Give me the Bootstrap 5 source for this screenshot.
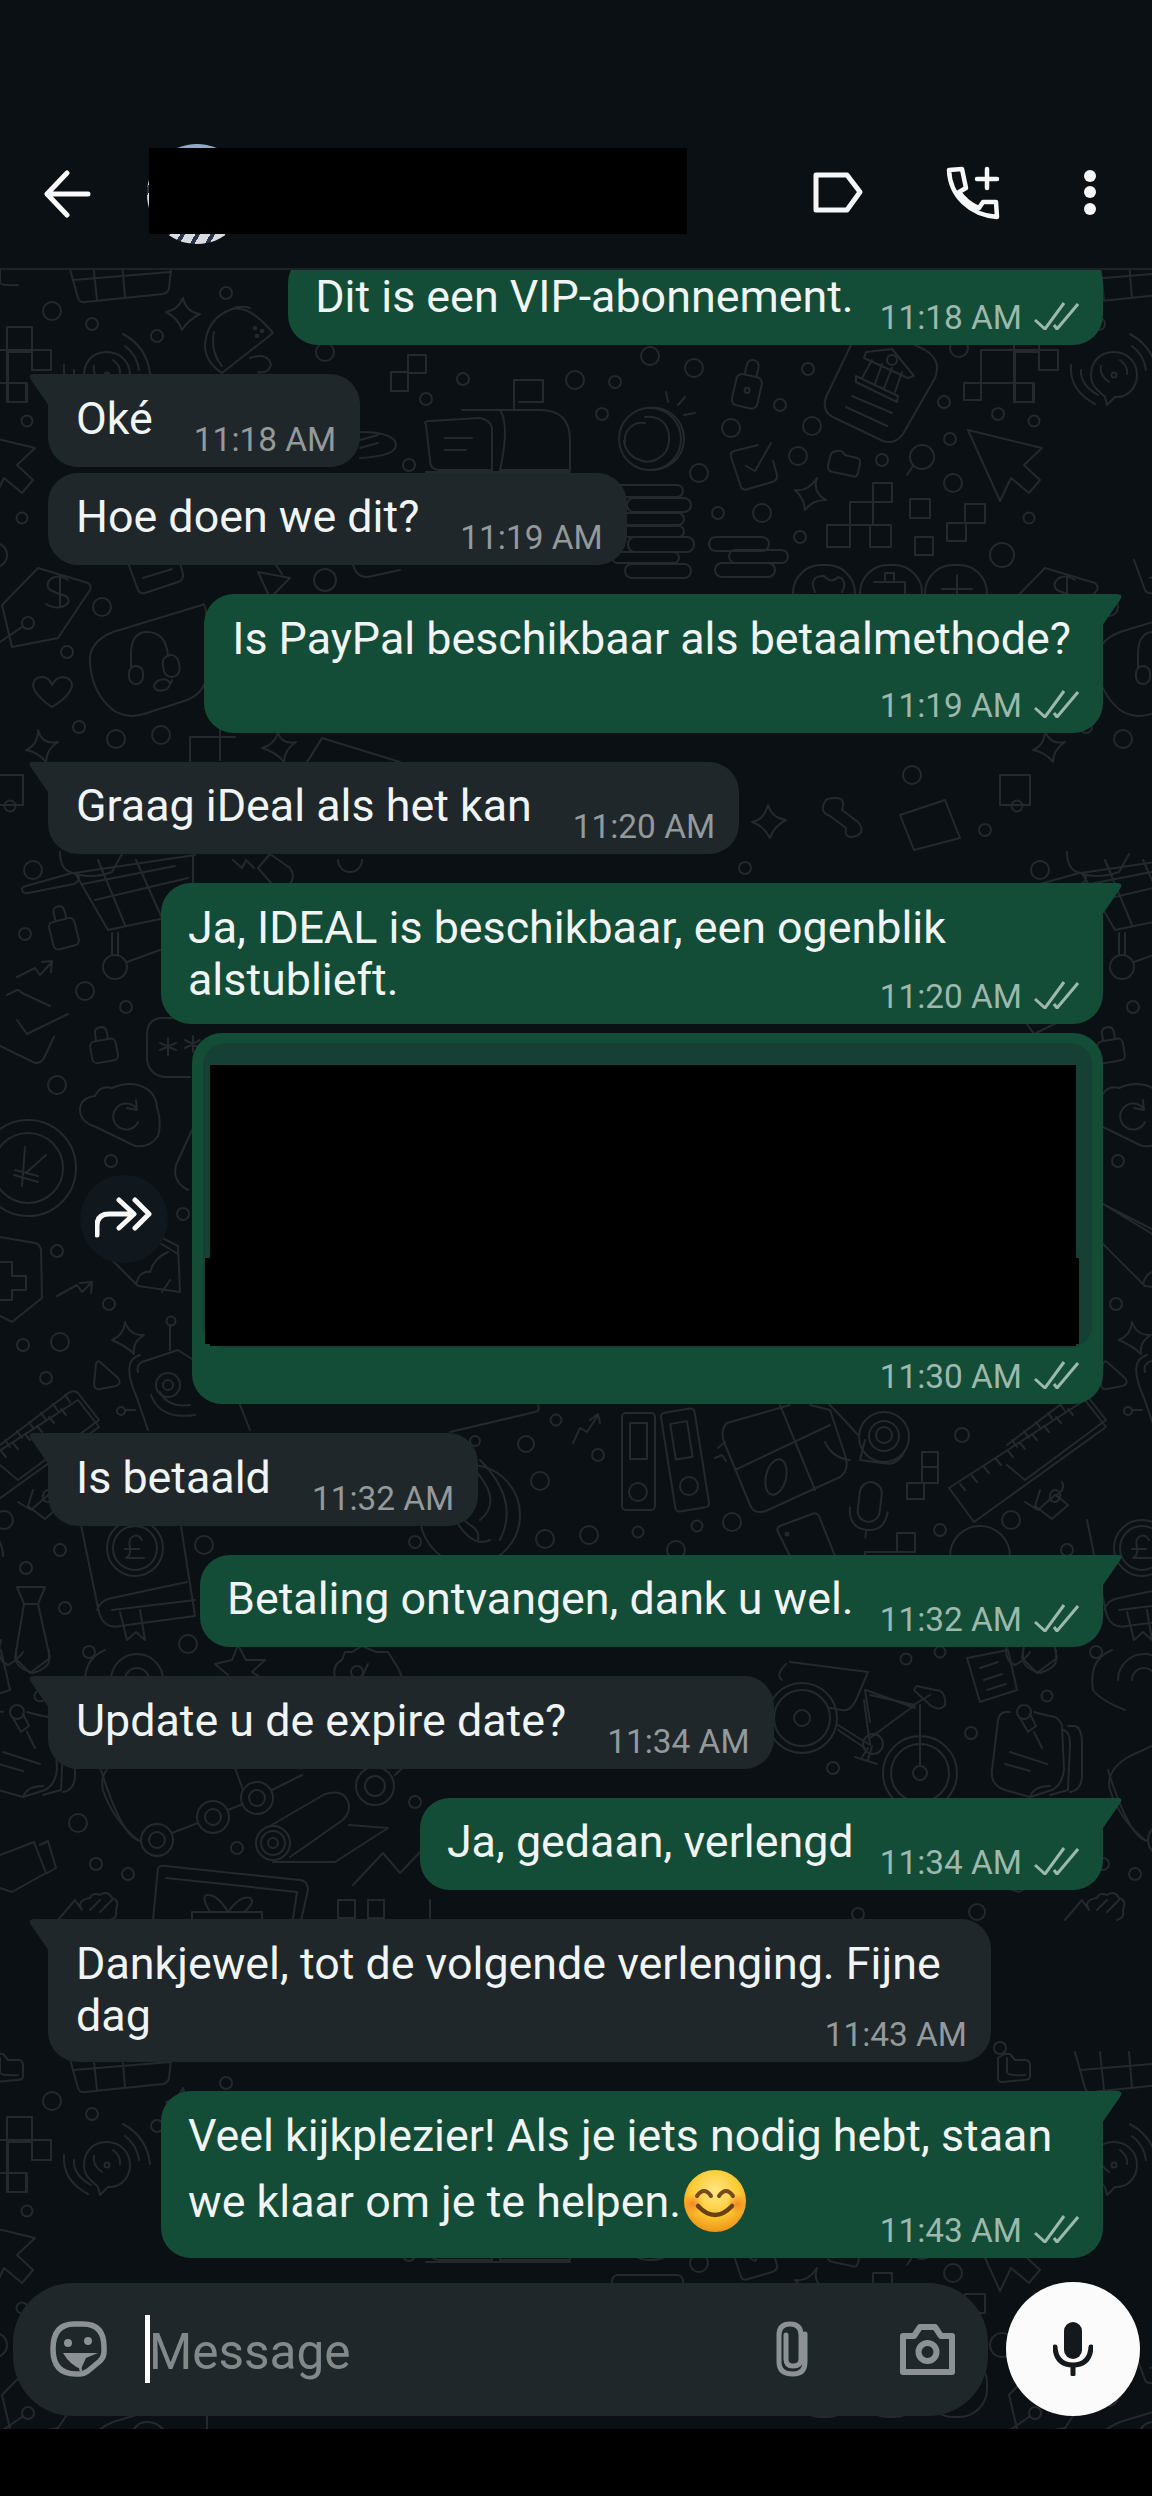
<!doctype html>
<html lang="nl">
<head>
<meta charset="utf-8">
<title>Chat</title>
<link href="https://cdn.jsdelivr.net/npm/bootstrap@5.3.0/dist/css/bootstrap.min.css" rel="stylesheet">
<style>
html,body{margin:0;background:#000;}
.phone{width:1152px;height:2496px;font-family:Roboto,"Liberation Sans",sans-serif;color:#f1f4f4;overflow:hidden;}
.topbar{height:270px;flex:none;padding-top:120px;background:#0b1014;border-bottom:2px solid #1c2226;position:relative;}
.face{width:100px;height:100px;border-radius:50%;margin-left:55px;background:linear-gradient(#8fa9c7 0 10%,#cfd6de 10% 16%,transparent 16%),repeating-linear-gradient(120deg,#d8dce0 0 9px,#27344a 9px 13px);}
.hide-name{position:absolute;left:149px;top:148px;width:538px;height:86px;background:#000;}
.chat{flex:1 1 auto;min-height:0;background:#0b1014;position:relative;overflow:hidden;}
.paper{position:absolute;left:0;top:0;}
.paper g{fill:none;stroke:#25292d;stroke-width:2;stroke-linecap:round;stroke-linejoin:round;}
.stream{flex:1 1 auto;min-height:0;overflow:hidden;position:relative;padding:0 49px 0 48px;}
.bub{position:relative;border-radius:30px;padding:18.5px 24px 7px 27px;font-size:44.8px;line-height:52.5px;width:fit-content;flex:none;}
.inc{background:#1f272a;align-self:flex-start;padding-left:28px;}
.out{background:#134d37;align-self:flex-end;}
.tail-l{border-top-left-radius:0;}
.tail-r{border-top-right-radius:0;}
.tail-l::before,.tail-r::before{content:"";position:absolute;top:0;width:21px;height:32px;background:inherit;}
.tail-l::before{left:-20px;clip-path:path("M21 0H6Q-1 0 3 6L21 32Z");}
.tail-r::before{right:-20px;clip-path:path("M0 0H15Q22 0 18 6L0 32Z");}
.one{display:flex;align-items:flex-end;}
.one .words{margin-bottom:14.5px;}
.one .stamp{margin-left:41px;}
.one .stamp.sent{margin-left:26px;}
.wide{width:942px;}
.wide-in{width:943px;}
.pp{padding-left:28px;padding-right:32px;}
.pp .stamp{margin-right:-8px;}
.last{display:flex;justify-content:space-between;align-items:flex-end;}
.last-a{margin-bottom:10.5px;}
.last-b{margin-bottom:12.5px;}
.last-c{margin-bottom:19px;}
.stamp{font-size:33.4px;line-height:40px;height:40px;white-space:nowrap;color:#94999b;display:flex;justify-content:flex-end;align-items:center;flex:none;}
.sent{color:#9db8ac;}
.sent svg{margin-left:12px;flex:none;margin-top:-4px;}
.gap-a{margin-top:29px;}
.gap-b{margin-top:6px;}
.gap-c{margin-top:9px;}
.below{margin-top:20.5px;}
.smile{width:62px;height:62px;vertical-align:-15px;margin:8px 0 0 3px;}
.fwd{width:88px;height:88px;border-radius:50%;background:#10181d;margin-right:24px;}
.shot{width:911px;height:371px;padding:10px 11px 7px;}
.dim{height:305px;background:#174035;border-radius:22px;padding:22px 16px 2px 7px;}
.hide-a{height:281px;background:#000;}
.hide-b{position:absolute;left:13px;top:225px;width:874px;height:86px;background:#000;}
.shot .stamp{margin-top:9px;padding-right:13px;}
.dock{flex:none;padding:24px 12px 13px 13px;position:relative;}
.field{width:975px;height:133px;border-radius:60px;background:#1f272a;padding-left:37px;}
.caret{width:5px;height:68px;background:#fff;margin-left:38px;flex:none;}
.hint{font-size:49.5px;line-height:68px;color:#83898b;margin-top:5px;margin-left:-1px;}
.talk{width:134px;height:134px;border-radius:50%;background:#fbfbfb;flex:none;}
.base{height:67px;flex:none;background:#000;}
</style>
</head>
<body>
<div class="phone d-flex flex-column">
  <header class="topbar d-flex align-items-center">
    <svg style="margin-left:44px" width="48" height="56" viewBox="44 167 48 56" fill="none" stroke="#fafafa" stroke-width="5" stroke-linecap="round" stroke-linejoin="round"><path d="M88 195H49M67 174 47 195l20 21"/></svg>
    <div class="face"></div>
    <svg class="ms-auto" width="53" height="56" viewBox="811 167 53 56" fill="none" stroke="#f6f7f8" stroke-width="5" stroke-linejoin="round"><path d="M816 176H847L860 193 847 211H816Z"/></svg>
    <svg style="margin-left:81px" width="55" height="56" viewBox="945 167 55 56" fill="none" stroke="#f6f7f8" stroke-width="4.5" stroke-linejoin="round" stroke-linecap="round"><path d="M949 171 962 170 966 189 959 193C963 199 971 206 979 209L983 203 996 203 997 218C970 216 950 197 949 171Z"/><path d="M987 170V189M977 180H997"/></svg>
    <svg style="margin-left:82px;margin-right:54px" width="16" height="56" viewBox="1082 167 16 56" fill="#f6f7f8"><circle cx="1090" cy="177" r="6"/><circle cx="1090" cy="193" r="6"/><circle cx="1090" cy="210" r="6"/></svg>
    <div class="hide-name"></div>
  </header>

  <main class="chat d-flex flex-column">
    <svg class="paper" width="1152" height="2159" viewBox="0 270 1152 2159" aria-hidden="true">
      <defs>
        <g id="tile">
          <circle cx="52" cy="311" r="9"/><circle cx="92" cy="324" r="6"/><circle cx="157" cy="336" r="6"/><circle cx="226" cy="293" r="6"/><circle cx="325" cy="352" r="9"/><circle cx="27" cy="421" r="5.5"/><circle cx="22" cy="518" r="5.5"/><circle cx="325" cy="580" r="11"/>
          <circle cx="426" cy="399" r="6"/><circle cx="463" cy="379" r="6"/><circle cx="575" cy="380" r="9"/><circle cx="615" cy="382" r="6"/><circle cx="602" cy="414" r="6"/><circle cx="409" cy="465" r="6"/>
          <circle cx="650" cy="356" r="9"/><circle cx="694" cy="368" r="9"/><circle cx="808" cy="369" r="6"/><circle cx="780" cy="405" r="6"/><circle cx="731" cy="428" r="9"/><circle cx="812" cy="426" r="9"/><circle cx="798" cy="456" r="9"/><circle cx="699" cy="473" r="9"/><circle cx="882" cy="460" r="6"/><circle cx="944" cy="402" r="6"/><circle cx="950" cy="439" r="6"/><circle cx="953" cy="483" r="9"/><circle cx="998" cy="414" r="6"/><circle cx="718" cy="513" r="6"/><circle cx="762" cy="513" r="9"/><circle cx="800" cy="537" r="6"/><circle cx="1002" cy="555" r="12"/><circle cx="959" cy="348" r="9"/>
          <circle cx="102" cy="607" r="9"/><circle cx="67" cy="652" r="6"/><circle cx="79" cy="727" r="6"/><circle cx="116" cy="739" r="9"/><circle cx="161" cy="735" r="9"/><circle cx="10" cy="806" r="5.5"/><circle cx="25" cy="934" r="6"/><circle cx="85" cy="991" r="9"/><circle cx="126" cy="1007" r="6"/>
          <circle cx="57" cy="1085" r="9"/><circle cx="111" cy="1161" r="6"/><circle cx="57" cy="1251" r="6"/><circle cx="109" cy="1304" r="6"/><circle cx="60" cy="1342" r="9"/><circle cx="23" cy="1345" r="6"/><circle cx="46" cy="1378" r="6"/><circle cx="183" cy="1214" r="6"/>
          <circle cx="556" cy="1420" r="5.5"/><circle cx="475" cy="1441" r="5"/><circle cx="526" cy="1444" r="8"/><circle cx="598" cy="1455" r="6"/><circle cx="540" cy="1481" r="9"/><circle cx="545" cy="1539" r="9"/><circle cx="589" cy="1535" r="9"/><circle cx="638" cy="1532" r="5.5"/><circle cx="697" cy="1526" r="5.5"/><circle cx="732" cy="1522" r="9"/><circle cx="676" cy="1550" r="9"/><circle cx="962" cy="1435" r="7"/><circle cx="1011" cy="1520" r="9"/><circle cx="940" cy="1530" r="6"/>
          <circle cx="60" cy="1550" r="6"/><circle cx="26" cy="1568" r="6"/><circle cx="65" cy="1608" r="6"/><circle cx="89" cy="1652" r="6"/><circle cx="204" cy="1545" r="9"/><circle cx="188" cy="1644" r="9"/><circle cx="415" cy="1542" r="6"/><circle cx="415" cy="1802" r="6"/><circle cx="78" cy="1823" r="9"/><circle cx="237" cy="1848" r="6"/><circle cx="96" cy="1864" r="6"/><circle cx="128" cy="1874" r="6"/>
          <circle cx="906" cy="1659" r="5.5"/><circle cx="940" cy="1652" r="5.5"/><circle cx="833" cy="1768" r="6"/><circle cx="971" cy="1733" r="6"/><circle cx="858" cy="1914" r="6"/><circle cx="977" cy="1912" r="8"/><circle cx="1047" cy="1696" r="5.5"/><circle cx="1000" cy="2048" r="6"/>
          <path d="M68 262 78 298Q80 303 85 302L163 294Q168 293 169 288L172 262M73 280 170 272M93 262 97 300M122 262 125 298"/>
          <path d="M0 268V282Q0 286 18 285"/>
          <path d="M183 298Q186 312 200 314 188 320 182 330 178 318 166 312 178 310 183 298Z"/>
          <path d="M273 333Q250 305 232 309 207 318 205 345 205 362 222 373ZM214 332Q210 352 222 366M250 308Q240 305 232 309"/>
          <circle cx="255" cy="328" r="1.3"/><circle cx="262" cy="331" r="1.3"/><circle cx="257" cy="336" r="1.3"/>
          <path d="M250 358Q268 352 271 365 268 374 258 372"/>
          <path d="M7 327H32V350H51V370H32V350H0M7 327V383H26V402H7V383M0 383H7"/>
          <path d="M107 352C90 352 84 365 84 375 84 388 94 392 98 397L100 405 108 397C122 398 130 386 130 375 130 362 120 352 107 352Z"/>
          <circle cx="107" cy="375" r="2.5"/><path d="M113 360Q121 366 120 374M94 366Q92 375 102 382M125 346Q137 355 139 370M123 334Q147 347 150 374M74 370Q73 385 91 395M64 365Q62 390 88 404"/>
          <path d="M408 355H426V373H408ZM391 372H408V391H391ZM514 410V380H543V402H519"/>
          <path d="M426 425Q423 421 430 421L480 418Q490 420 492 428V470H440Q430 470 430 460ZM445 438H472M445 450H466M462 410H540Q570 410 570 440V470H500M500 410Q510 425 500 470M426 472H570"/>
          <path d="M360 432Q395 432 396 445 396 456 360 458M360 440 378 435M360 448 378 443"/>
          <path d="M258 572 290 578 270 598ZM270 556 282 574"/>
          <path d="M127 560 138 590Q140 594 145 593L178 582Q184 580 183 574L180 562M143 578 172 569"/>
          <path d="M353 565Q357 578 368 577L400 570"/>
          <g transform="rotate(13 745 395)"><rect x="733" y="375" width="26" height="32" rx="6"/><path d="M740 375V366Q740 359 746 359 752 359 752 366V375"/><circle cx="746" cy="390" r="2.5"/></g>
          <circle cx="650" cy="439" r="31"/><path d="M646 408C668 405 684 420 684 439 684 458 668 470 650 470M645 423A17 17 0 0 0 625 442M645 417C665 415 670 430 669 441 668 458 650 465 640 460 628 456 625 448 624 441M666 392 668 402M685 397 678 405M695 413 684 415"/>
          <path d="M758 445 734 451Q730 452 731 457L741 487Q743 491 748 489L772 482Q778 480 777 475L773 461M746 466 755 471 771 443"/>
          <path d="M833 452 836 451Q839 450 843 452L845 455 857 458Q861 459 860 464L858 473Q857 478 852 476L833 472Q827 471 828 466L830 457Q831 453 833 452Z"/>
          <circle cx="922" cy="457" r="12"/><path d="M913 466 907 475"/>
          <path d="M851 345 826 397Q821 412 835 418L883 441Q895 445 903 434L935 378Q942 360 925 350L913 344"/>
          <path d="M866 352 892 349 914 376 908 378 864 358ZM872 360 862 378M882 364 875 384M892 368 884 388M902 372 895 392M856 376 898 396 897 402 856 382Z"/><circle cx="892" cy="360" r="5"/><path d="M852 396 892 413M846 407 887 426"/>
          <path d="M981 350H1015V383H981ZM1015 352H1039M1039 350H1058V370H1039ZM964 383H981V400H964ZM1015 383H1034V402H1015Z"/>
          <path d="M968 430 1042 448 1024 465 1040 480 1029 493 1011 478 1000 501Z"/>
          <path d="M817 478Q812 492 826 500 812 500 805 510 804 498 795 490 808 492 817 478Z"/>
          <path d="M873 483H892V502H873ZM850 502H873V525H850ZM827 525H850V547H827ZM870 525H891V547H870ZM910 499H930V518H910ZM915 537H933V555H915ZM965 504H985V523H965ZM947 523H966V541H947Z"/>
          <rect x="612" y="485" width="71" height="12" rx="6"/><rect x="627" y="498" width="64" height="14" rx="7"/><rect x="612" y="513" width="72" height="12" rx="6"/><rect x="612" y="526" width="72" height="11" rx="5.5"/><rect x="628" y="537" width="66" height="15" rx="7"/><rect x="612" y="552" width="67" height="11" rx="5.5"/><rect x="625" y="564" width="66" height="14" rx="7"/>
          <rect x="709" y="537" width="60" height="14" rx="7"/><rect x="729" y="550" width="59" height="13" rx="6.5"/><rect x="715" y="563" width="60" height="14" rx="7"/>
          <rect x="793" y="565" width="62" height="62" rx="28"/><rect x="860" y="565" width="62" height="62" rx="28"/><rect x="925" y="565" width="62" height="62" rx="28"/>
          <path d="M815 592Q808 576 824 576 832 584 838 577 848 580 842 592M874 582H905V595M885 580V573H894V580M957 575V595M942 589H972"/>
          <path d="M38 568 88 583Q92 586 90 590L58 638 12 647 2 605Z"/><circle cx="28" cy="623" r="6"/><path d="M22 627 0 642M60 575V607M68 580Q60 574 52 578 44 584 50 590 58 594 66 596 72 602 64 606 56 610 46 604"/>
          <path d="M52 707Q34 695 33 685 34 677 42 677 49 677 52 685 56 677 63 677 72 678 72 686 70 696 52 707Z"/>
          <path d="M202 605 113 632Q88 642 90 663 92 693 113 710 128 720 147 713L187 700Q207 692 207 670V620Q205 600 202 605Z"/>
          <path d="M131 668V652Q132 632 147 632 166 632 168 656"/><rect x="129" y="666" width="14" height="18" rx="7"/><g transform="rotate(-10 171 665)"><rect x="163" y="655" width="16" height="22" rx="8"/></g><ellipse cx="162" cy="685" rx="8" ry="5.5" transform="rotate(-15 162 685)"/><path d="M172 680Q172 682 170 684"/>
          <path d="M38 730Q42 745 58 742 46 750 46 762 38 752 26 750 38 745 38 730Z"/><path d="M278 733Q282 745 296 742 284 750 284 762 276 752 262 748 274 745 278 733Z"/>
          <path d="M190 762V737H220M220 727V760M220 737H235"/>
          <path d="M307 762 322 738 400 762M322 738 310 758"/>
          <path d="M26 886 72 873Q78 872 79 877 79 882 74 884L28 893Q22 894 22 889 22 887 26 886Z"/><path d="M75 873 108 930 193 912V855M74 873 195 855M95 900 188 878M98 860 125 925M136 860 162 918M83 884 175 866"/><path d="M112 933V955M118 933V955"/><circle cx="115" cy="967" r="12"/><path d="M127 962 160 950"/>
          <path d="M60 852Q60 868 70 872 90 880 112 872M112 872 122 854"/>
          <g transform="rotate(-14 62 930)"><rect x="50" y="920" width="26" height="28" rx="5"/><path d="M58 920V912Q58 906 63 906 69 906 69 912V920"/></g>
          <path d="M233 860 242 868 246 860 254 868M258 868 270 854 290 868Q296 876 290 884M258 868 272 884"/><path d="M338 860A12 12 0 0 0 362 860"/>
          <path d="M17 977 35 968 40 975 52 962M42 962 52 961 51 972"/>
          <path d="M7 995 17 990Q20 990 22 993L50 1006M17 1020 27 1034 68 1014M0 1046 33 1062Q40 1065 44 1058L54 1037"/>
          <g transform="rotate(-10 103 1045)"><rect x="90" y="1040" width="26" height="22" rx="5"/><path d="M97 1040V1033Q97 1027 103 1027 109 1027 109 1033V1040"/></g>
          <path d="M195 1018H160Q147 1020 147 1035V1060Q150 1076 165 1077H190"/><path d="M168 1038V1055M160 1043 176 1050M176 1043 160 1050M193 1036V1052M185 1040 200 1048M200 1040 185 1048"/>
          <path d="M96 1127Q80 1122 80 1110 80 1098 95 1096 100 1085 112 1088 125 1082 138 1085 156 1090 157 1108 162 1122 158 1136 150 1148 135 1146Z"/><path d="M136 1108A13 13 0 1 0 138 1122M136 1100 137 1110 127 1108"/>
          <circle cx="28" cy="1168" r="48"/><circle cx="28" cy="1168" r="35"/><path d="M25 1147 22 1186M46 1155 27 1172M15 1170 38 1176M14 1175 38 1182"/>
          <path d="M0 1237 35 1243Q40 1244 41 1250L42 1298 12 1322 0 1316M0 1262H12V1276H26V1290H12V1300H0"/>
          <path d="M192 1130 176 1165Q172 1182 188 1190"/>
          <path d="M88 1200 178 1246 180 1292 138 1286 84 1232Q80 1215 88 1200ZM96 1204 178 1254M136 1284Q140 1270 150 1272 154 1258 168 1252M170 1280 162 1292"/>
          <path d="M57 1296 77 1285 82 1292 91 1283M80 1283 92 1282 91 1293"/>
          <path d="M125 1322Q130 1336 144 1335 132 1342 134 1354 126 1346 112 1340 124 1335 125 1322Z"/>
          <path d="M100 1362 118 1378Q122 1384 116 1386L100 1389Q94 1390 94 1384L96 1364Q97 1360 100 1362Z"/>
          <path d="M140 1355Q120 1360 137 1398L148 1430M250 1430 232 1385 178 1350 142 1362Q136 1365 138 1372"/><circle cx="168" cy="1385" r="12"/><circle cx="168" cy="1385" r="5"/><path d="M151 1395Q160 1420 195 1415M160 1392Q168 1408 190 1405M170 1325V1350"/><circle cx="171" cy="1321" r="4.5"/><circle cx="121" cy="1411" r="4"/><path d="M125 1410H135"/>
          <path d="M0 1445 70 1392Q75 1390 78 1393L99 1420 18 1480 0 1465M5 1440 10 1447M17 1431 22 1438M29 1422 34 1429M41 1413 46 1420M53 1404 58 1411M65 1395 70 1402"/>
          <path d="M450 1432 535 1412Q541 1410 538 1405M573 1443 580 1428 587 1432 598 1415M590 1420 598 1414 600 1423"/>
          <circle cx="470" cy="1515" r="50"/><path d="M470 1465Q505 1500 480 1520M440 1500 470 1525Q480 1530 478 1540M480 1460Q520 1500 500 1540M450 1510Q470 1550 490 1540M475 1480 462 1505"/>
          <rect x="622" y="1413" width="33" height="97" rx="4"/><rect x="630" y="1423" width="17" height="36"/><circle cx="638" cy="1492" r="9"/>
          <g transform="rotate(-9 685 1460)"><rect x="668" y="1410" width="34" height="100" rx="4"/><rect x="676" y="1422" width="17" height="36"/></g><circle cx="689" cy="1486" r="9"/>
          <path d="M727 1423Q720 1430 724 1442L750 1505Q755 1516 768 1510L840 1477Q850 1470 845 1455L830 1410 810 1405M727 1423 790 1405M735 1470 830 1425M780 1405 815 1490"/><ellipse cx="776" cy="1477" rx="10" ry="18" transform="rotate(14 776 1477)"/><path d="M718 1448 725 1442M715 1458 722 1455 726 1461"/>
          <circle cx="884" cy="1437" r="25"/><circle cx="884" cy="1436" r="15"/><circle cx="884" cy="1435" r="8"/><path d="M858 1435Q840 1415 825 1400M860 1460 890 1464Q900 1462 905 1450M825 1442Q832 1458 850 1460M865 1440 860 1460"/>
          <path d="M922 1452H938V1467H922ZM922 1467H938V1483H922ZM907 1483H924V1499H907Z"/>
          <g transform="rotate(7 870 1500)"><rect x="859" y="1482" width="22" height="40" rx="11"/><path d="M851 1510Q852 1530 870 1530 888 1530 889 1510M870 1530V1538"/></g>
          <path d="M949 1488 1085 1400 1106 1427 974 1522ZM960 1484 965 1490M972 1476 977 1482M984 1467 989 1473M996 1459 1001 1465M1008 1451 1013 1457M1020 1443 1025 1449M1032 1434 1037 1440M1044 1426 1049 1432M1056 1417 1061 1423M1068 1409 1073 1415"/>
          <path d="M790 1556 778 1532Q776 1528 780 1526L812 1514Q816 1512 819 1516L835 1556"/><circle cx="787" cy="1534" r="1.5"/>
          <path d="M865 1556V1552H897V1533H915V1552H897M864 1556A30 30 0 0 1 760 1556"/>
          <path d="M1025 1502 1038 1510 1055 1495 1062 1500M1040 1490 1035 1506 1052 1519 1068 1505 1056 1495Q1066 1490 1062 1482"/><rect x="1050" y="1490" width="10" height="12" rx="5" transform="rotate(20 1055 1496)"/>
          <path d="M950 1556A28 28 0 0 1 1010 1556"/>
          <path d="M80 1520 98 1608Q102 1630 120 1626L195 1616 180 1520M97 1610Q100 1600 112 1598L187 1582M112 1610 195 1600M120 1612 127 1640 136 1632 145 1640 140 1610"/>
          <circle cx="135" cy="1548" r="28"/><circle cx="135" cy="1548" r="22"/><path d="M142 1540Q138 1533 132 1537 128 1540 130 1548 131 1556 126 1558H144M125 1549H139"/>
          <path d="M17 1587H45L38 1604 50 1658 30 1673 15 1658 24 1604ZM24 1604H38"/>
          <path d="M111 1680A26 26 0 0 1 163 1680M125 1680A12 12 0 0 1 149 1680"/>
          <path d="M215 1664 232 1660 238 1645 246 1660 265 1660 252 1672 260 1677M215 1664 228 1675"/>
          <path d="M335 1677Q332 1665 342 1660L345 1652 352 1652 362 1646 376 1652 388 1652 398 1668 402 1677"/><circle cx="357" cy="1672" r="6"/><path d="M368 1664 362 1677"/>
          <path d="M1010 1712Q1000 1710 998 1720L992 1770Q990 1785 1005 1790L1030 1797 1052 1790Q1062 1785 1064 1770L1062 1725Q1058 1716 1050 1716 1045 1715 1034 1712"/><path d="M1062 1730Q1070 1730 1070 1745L1068 1790 1050 1795M1068 1726H1075Q1082 1728 1082 1745V1775Q1082 1790 1070 1792"/><circle cx="1024" cy="1712" r="7"/><path d="M1020 1718 1028 1732 1036 1726 1030 1714M1034 1732 1042 1748M1010 1752 1047 1764M1005 1764 1030 1771M1030 1797Q1034 1786 1050 1786"/>
          <path d="M967 1658 1008 1650 1017 1690 980 1702ZM980 1668 998 1662M984 1680 1002 1674M987 1690 1006 1684"/>
          <path d="M1023 1650V1660Q1024 1668 1040 1673 1056 1668 1056 1660V1650"/>
          <circle cx="802" cy="1718" r="35"/><circle cx="802" cy="1718" r="28"/><circle cx="802" cy="1718" r="8"/><circle cx="920" cy="1773" r="37"/><circle cx="920" cy="1773" r="29"/><circle cx="920" cy="1773" r="7"/>
          <path d="M838 1725 870 1745 864 1700M870 1738 915 1705 870 1695M920 1766V1705 M915 1704 930 1695M915 1708 866 1690M865 1690 870 1722M838 1730 865 1748"/><circle cx="873" cy="1744" r="10"/><path d="M868 1748 862 1757M855 1757 877 1764M872 1746 868 1760"/><path d="M916 1692Q912 1690 917 1686L935 1690Q946 1690 945 1705 940 1712 930 1705Z"/>
          <path d="M790 1662 868 1672 856 1700Q850 1712 842 1710L830 1708M786 1664Q775 1675 782 1680"/>
          <path d="M1008 1640Q1002 1660 1015 1665 1025 1660 1030 1652"/>
          <path d="M1112 1650Q1088 1660 1093 1690 1100 1700 1125 1710"/>
          <path d="M1152 1746 1130 1756Q1105 1770 1110 1790 1120 1820 1145 1840"/>
          <circle cx="157" cy="1840" r="16"/><circle cx="157" cy="1840" r="8"/><circle cx="213" cy="1817" r="16"/><circle cx="213" cy="1817" r="8"/><circle cx="257" cy="1798" r="16"/><circle cx="257" cy="1798" r="8"/><circle cx="375" cy="1786" r="19"/><circle cx="375" cy="1786" r="10"/>
          <path d="M101 1770Q115 1815 128 1832 134 1840 141 1841M172 1833 198 1823M228 1810 243 1804M272 1790 302 1775M235 1768 243 1790M395 1775 408 1763"/>
          <circle cx="273" cy="1843" r="17"/><circle cx="273" cy="1843" r="12"/><circle cx="273" cy="1843" r="5"/><path d="M270 1826 325 1794Q345 1788 349 1805 350 1815 340 1822L290 1857M349 1825 388 1828 335 1862H273"/>
          <path d="M353 1885 383 1853 400 1873 422 1850"/>
          <path d="M0 1855 34 1842 46 1873 12 1892 0 1888M40 1845 48 1841 56 1868 47 1873"/>
          <path d="M153 1920 158 1868Q160 1865 165 1866L300 1880Q308 1881 308 1890L300 1925M166 1878 297 1892 292 1925M192 1912H262L262 1925M210 1912Q200 1895 208 1895 218 1895 228 1912 240 1895 250 1898 256 1902 244 1912M192 1925V1912"/>
          <path d="M338 1918H355V1900H338ZM368 1918H384V1900H368ZM430 1900V1918"/>
          <path d="M58 1920 75 1900 82 1910M82 1910Q76 1900 90 1898 92 1892 100 1895 108 1890 112 1898 120 1900 116 1910 118 1918 110 1920M90 1910 100 1900 M100 1912 112 1900"/>
          <path d="M768 805Q772 818 786 820 774 826 770 838 764 826 752 822 764 820 768 805Z"/>
          <path d="M826 800Q818 812 830 816L846 828Q844 840 856 836 866 832 858 822L842 810Q846 798 836 798 828 798 826 800Z"/>
          <circle cx="912" cy="775" r="9"/><circle cx="985" cy="830" r="6"/><circle cx="745" cy="868" r="6"/><circle cx="1040" cy="870" r="9"/><path d="M900 815 945 800 960 838 914 850ZM1000 775H1030V805H1000Z"/>
          <path d="M998 2058 1001 2056Q1005 2053 1010 2054L1015 2060 1026 2060Q1030 2061 1030 2065V2076Q1030 2080 1024 2080L1002 2082Q998 2082 998 2078Z"/>
        </g>
      </defs>
      <g>
        <use href="#tile"/><use href="#tile" x="1007"/><use href="#tile" x="-1007"/>
        <use href="#tile" y="1790"/><use href="#tile" x="1007" y="1790"/><use href="#tile" x="-1007" y="1790"/>
      </g>
    </svg>

    <section class="stream d-flex flex-column justify-content-end">
      <div class="bub out one"><span class="words">Dit is een VIP-abonnement.</span>
        <span class="stamp sent">11:18 AM<svg width="45" height="28" viewBox="0 0 45 28" fill="none" stroke="currentColor" stroke-width="3"><path d="M1 18 11 27 30 1M20 23 23 27 44 2"/></svg></span></div>

      <div class="bub inc one tail-l gap-a"><span class="words">Oké</span><span class="stamp">11:18 AM</span></div>
      <div class="bub inc one gap-b"><span class="words">Hoe doen we dit?</span><span class="stamp">11:19 AM</span></div>

      <div class="bub out pp tail-r gap-a"><div>Is PayPal beschikbaar als betaalmethode?</div>
        <div class="stamp sent below">11:19 AM<svg width="45" height="28" viewBox="0 0 45 28" fill="none" stroke="currentColor" stroke-width="3"><path d="M1 18 11 27 30 1M20 23 23 27 44 2"/></svg></div></div>

      <div class="bub inc one tail-l gap-a"><span class="words">Graag iDeal als het kan</span><span class="stamp">11:20 AM</span></div>

      <div class="bub out wide tail-r gap-a"><div>Ja, IDEAL is beschikbaar, een ogenblik</div>
        <div class="last"><span class="last-a">alstublieft.</span><span class="stamp sent">11:20 AM<svg width="45" height="28" viewBox="0 0 45 28" fill="none" stroke="currentColor" stroke-width="3"><path d="M1 18 11 27 30 1M20 23 23 27 44 2"/></svg></span></div></div>

      <div class="d-flex align-items-center align-self-end gap-c">
        <div class="fwd d-flex align-items-center justify-content-center">
          <svg width="58" height="44" viewBox="96 1200 58 44" fill="none" stroke="#fafafa" stroke-width="5" stroke-linecap="round" stroke-linejoin="round"><path d="M98 1238V1229Q98 1217 110 1217H134M120 1203 135 1217 120 1231M136 1203 150 1217 136 1231"/></svg>
        </div>
        <div class="bub out shot">
          <div class="dim"><div class="hide-a"></div></div>
          <div class="hide-b"></div>
          <div class="stamp sent">11:30 AM<svg width="45" height="28" viewBox="0 0 45 28" fill="none" stroke="currentColor" stroke-width="3"><path d="M1 18 11 27 30 1M20 23 23 27 44 2"/></svg></div>
        </div>
      </div>

      <div class="bub inc one tail-l gap-a"><span class="words">Is betaald</span><span class="stamp">11:32 AM</span></div>

      <div class="bub out one tail-r gap-a"><span class="words">Betaling ontvangen, dank u wel.</span>
        <span class="stamp sent">11:32 AM<svg width="45" height="28" viewBox="0 0 45 28" fill="none" stroke="currentColor" stroke-width="3"><path d="M1 18 11 27 30 1M20 23 23 27 44 2"/></svg></span></div>

      <div class="bub inc one tail-l gap-a"><span class="words">Update u de expire date?</span><span class="stamp">11:34 AM</span></div>

      <div class="bub out one tail-r gap-a"><span class="words">Ja, gedaan, verlengd</span>
        <span class="stamp sent">11:34 AM<svg width="45" height="28" viewBox="0 0 45 28" fill="none" stroke="currentColor" stroke-width="3"><path d="M1 18 11 27 30 1M20 23 23 27 44 2"/></svg></span></div>

      <div class="bub inc wide-in tail-l gap-a"><div>Dankjewel, tot de volgende verlenging. Fijne</div>
        <div class="last"><span class="last-b">dag</span><span class="stamp">11:43 AM</span></div></div>

      <div class="bub out wide tail-r gap-a"><div>Veel kijkplezier! Als je iets nodig hebt, staan</div>
        <div class="last"><span class="last-c">we klaar om je te helpen.<svg class="smile" viewBox="0 0 62 62"><defs><radialGradient id="fc" cx="50%" cy="35%" r="70%"><stop offset="0" stop-color="#ffe985"/><stop offset=".55" stop-color="#fbc934"/><stop offset="1" stop-color="#f08a12"/></radialGradient><radialGradient id="ck"><stop offset="0" stop-color="#f47a20" stop-opacity=".8"/><stop offset="1" stop-color="#f47a20" stop-opacity="0"/></radialGradient></defs><circle cx="31" cy="31" r="31" fill="url(#fc)"/><circle cx="9" cy="34" r="10" fill="url(#ck)"/><circle cx="53" cy="34" r="10" fill="url(#ck)"/><path d="M13 26Q20 16 27 26M35 26Q42 16 49 26" fill="none" stroke="#7a4a1c" stroke-width="4" stroke-linecap="round"/><path d="M14 36Q31 54 48 36" fill="none" stroke="#6b3f12" stroke-width="4.5" stroke-linecap="round"/></svg></span>
        <span class="stamp sent">11:43 AM<svg width="45" height="28" viewBox="0 0 45 28" fill="none" stroke="currentColor" stroke-width="3"><path d="M1 18 11 27 30 1M20 23 23 27 44 2"/></svg></span></div></div>
    </section>

    <footer class="dock d-flex align-items-center justify-content-between">
      <div class="field d-flex align-items-center">
        <svg width="57" height="56" viewBox="0 0 57 56" fill="none" stroke="#8b9194" stroke-width="5.5" stroke-linejoin="round"><path d="M24 3H33Q54 3 54 26V31Q54 36 50 40L38 50Q34 53 30 53H26Q3 53 3 28 3 3 24 3Z"/><circle cx="18" cy="22" r="4" fill="#8b9194" stroke="none"/><circle cx="38" cy="20" r="4" fill="#8b9194" stroke="none"/><path d="M13 32H48L36 37 31 48Q20 44 13 32Z" fill="#8b9194" stroke="none"/><path d="M33 39Q28 42 31 50" stroke-width="2.5"/></svg>
        <span class="caret"></span>
        <span class="hint">Message</span>
        <svg class="ms-auto" width="35" height="56" viewBox="0 0 35 56" fill="none" stroke="#8b9194" stroke-width="5" stroke-linecap="round"><path d="M30 13V41Q30 53 18 53 4 53 4 41V14Q4 3 15 3 26 3 26 14V38Q26 45 18 45 11 45 11 38V14"/></svg>
        <svg style="margin-left:90px;margin-right:33px" width="55" height="52" viewBox="0 0 55 52" fill="none" stroke="#8b9194" stroke-width="6" stroke-linejoin="round"><path d="M3 13H14L20 4H35L41 13H52V49H3Z"/><circle cx="27.5" cy="29" r="9"/></svg>
      </div>
      <div class="talk d-flex align-items-center justify-content-center">
        <svg width="40" height="54" viewBox="0 0 40 54"><rect x="11" y="0" width="18" height="37" rx="9" fill="#13191c"/><path d="M2 25Q3 43 20 43 37 43 38 25" fill="none" stroke="#13191c" stroke-width="5" stroke-linecap="round"/><rect x="17.5" y="42" width="5" height="12" rx="1.5" fill="#13191c"/></svg>
      </div>
    </footer>
  </main>
  <div class="base"></div>
</div>
<script src="https://cdn.jsdelivr.net/npm/bootstrap@5.3.0/dist/js/bootstrap.bundle.min.js"></script>
</body>
</html>
